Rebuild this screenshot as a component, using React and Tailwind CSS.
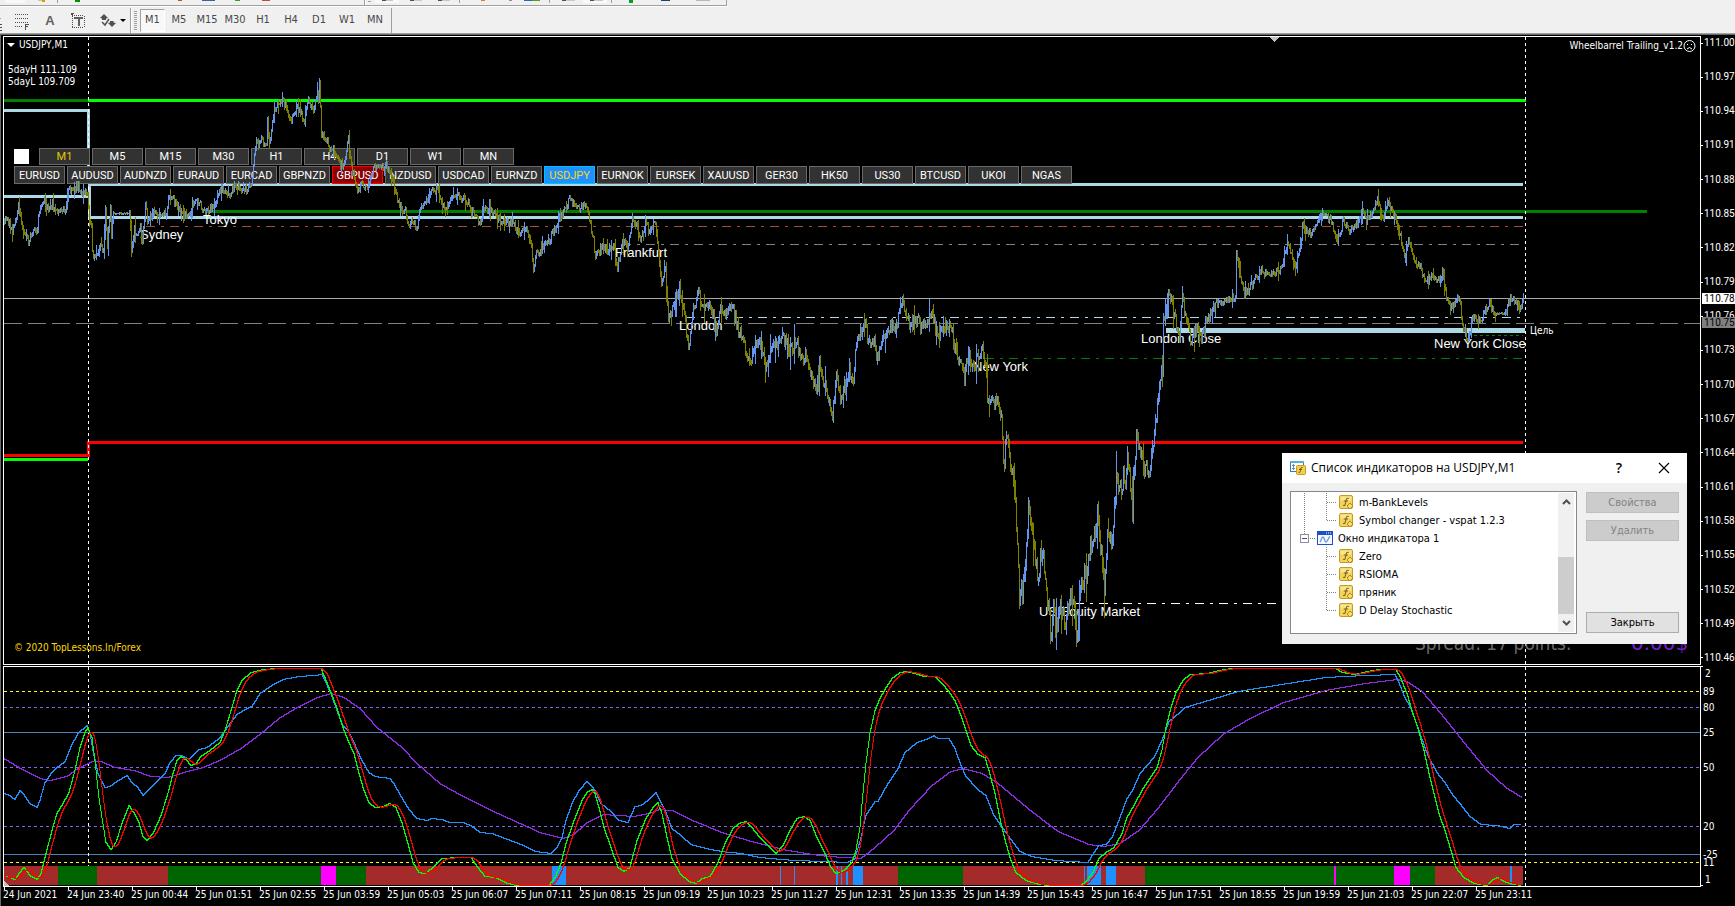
import React from "react";

/* ---------- data ---------- */

const PRICE = [
  [4,220],[8,222],[12,229],[16,217],[18,207],[22,227],[28,243],[31,233],[36,230],[39,213],[44,199],[46,208],[52,204],[55,211],
  [65,209],[67,190],[74,189],[78,184],[81,193],[84,190],[87,197],[89,221],[91,224],[92,253],[97,256],[99,247],[103,247],
  [105,210],[107,245],[110,209],[111,240],[113,213],[129,213],[131,247],[134,230],[137,238],[140,222],[142,240],[145,204],
  [147,220],[152,213],[166,212],[168,198],[176,200],[178,210],[189,218],[192,204],[200,201],[203,212],[214,205],[221,188],
  [229,193],[236,184],[244,190],[251,187],[253,163],[256,142],[261,140],[266,147],[267,122],[269,143],[273,113],[276,107],
  [282,101],[287,110],[291,120],[296,107],[299,110],[304,121],[308,100],[313,110],[317,87],[318,100],[319,80],[321,133],
  [326,140],[329,147],[335,153],[340,167],[344,163],[348,138],[351,167],[357,190],[362,183],[368,190],[372,170],[378,163],
  [385,167],[389,167],[395,190],[400,207],[405,210],[408,227],[412,220],[416,230],[420,208],[425,203],[431,187],[437,190],
  [442,203],[448,205],[454,193],[461,198],[467,200],[472,213],[479,222],[484,210],[490,208],[496,217],[503,222],[512,223],
  [518,233],[527,230],[531,247],[533,270],[536,253],[542,247],[549,240],[555,227],[562,213],[566,207],[569,198],[573,203],
  [579,207],[585,205],[590,223],[593,240],[595,260],[601,245],[607,250],[613,245],[617,267],[622,243],[628,245],[632,217],
  [635,223],[640,237],[645,223],[650,233],[654,218],[658,250],[660,277],[665,272],[668,318],[672,307],[679,288],[684,317],
  [688,345],[692,317],[698,290],[703,313],[706,301],[712,313],[716,330],[719,312],[727,313],[732,305],[738,330],[743,337],
  [748,362],[753,353],[755,343],[760,343],[765,368],[770,347],[775,347],[782,333],[789,353],[795,343],[803,357],[807,357],
  [812,377],[816,387],[819,370],[825,387],[829,405],[832,418],[836,377],[840,400],[844,383],[849,372],[853,377],[856,343],
  [864,323],[869,343],[873,337],[877,357],[882,343],[888,327],[897,323],[902,297],[906,317],[911,327],[917,317],[921,330],
  [927,317],[933,317],[937,337],[941,327],[950,327],[954,343],[958,357],[964,377],[968,353],[974,370],[977,357],[982,350],
  [986,367],[987,407],[990,393],[993,400],[999,407],[1002,433],[1003,467],[1006,440],[1010,460],[1013,480],[1015,500],
  [1017,550],[1019,595],[1022,593],[1025,557],[1028,507],[1032,533],[1035,560],[1038,583],[1040,550],[1043,560],[1047,600],
  [1051,640],[1053,600],[1056,627],[1061,603],[1066,623],[1068,600],[1073,603],[1076,640],[1080,590],[1085,573],[1090,547],
  [1093,543],[1097,513],[1099,533],[1102,567],[1104,587],[1108,527],[1111,543],[1114,510],[1117,470],[1119,493],[1123,477],
  [1125,488],[1127,467],[1132,490],[1135,460],[1136,437],[1139,440],[1143,470],[1146,457],[1149,478],[1152,443],[1155,427],
  [1157,397],[1159,377],[1162,367],[1163,320],[1165,312],[1169,290],[1175,320],[1179,333],[1182,293],[1185,317],[1190,338],
  [1197,327],[1201,341],[1206,320],[1213,307],[1221,300],[1229,297],[1235,297],[1236,250],[1240,277],[1243,290],[1246,293],
  [1252,283],[1261,270],[1269,277],[1276,270],[1281,270],[1287,240],[1294,267],[1298,257],[1302,227],[1310,233],[1315,227],
  [1321,213],[1331,220],[1336,243],[1343,220],[1348,230],[1353,230],[1361,212],[1366,220],[1372,213],[1377,200],[1382,220],
  [1388,200],[1394,213],[1400,237],[1404,257],[1408,240],[1413,260],[1420,267],[1425,283],[1432,273],[1437,283],[1442,273],
  [1446,297],[1452,307],[1459,297],[1463,330],[1468,340],[1472,317],[1479,322],[1489,300],[1494,313],[1505,313],[1510,297],
  [1517,300],[1519,313],[1523,297],
];

const FAST = [
  [4,877],[8,876],[15,879],[19,873],[24,867],[30,875],[37,879],[41,873],[46,853],[52,830],[57,813],[63,803],[69,792],[75,770],
  [80,747],[85,732],[88,727],[92,737],[95,760],[99,797],[103,823],[106,842],[111,849],[116,842],[122,823],[129,805],[134,812],
  [139,822],[143,836],[147,840],[153,833],[161,815],[168,793],[173,773],[177,760],[181,756],[187,760],[191,765],[196,763],
  [201,756],[210,750],[220,742],[226,727],[232,707],[237,690],[242,680],[251,672],[264,669],[276,668],[321,668],[325,677],
  [331,692],[337,708],[343,727],[348,740],[354,753],[359,773],[364,790],[369,802],[375,807],[383,806],[390,803],[396,807],
  [402,822],[408,843],[413,862],[419,872],[425,873],[432,868],[442,858],[459,857],[471,857],[478,867],[485,876],[496,877],
  [505,882],[517,885],[549,885],[555,877],[561,863],[566,843],[574,820],[582,800],[587,792],[592,789],[595,793],[599,807],
  [604,827],[611,847],[618,867],[624,871],[630,867],[637,840],[646,818],[653,807],[658,802],[662,813],[667,837],[672,858],
  [680,873],[689,881],[696,883],[702,878],[710,876],[718,862],[725,843],[733,828],[739,823],[746,821],[752,827],[760,837],
  [768,845],[776,853],[783,845],[790,830],[797,818],[804,816],[810,820],[817,837],[825,853],[831,867],[836,873],[844,870],
  [852,862],[856,850],[860,827],[863,793],[866,763],[870,733],[875,710],[880,698],[886,687],[892,678],[900,672],[907,671],
  [915,673],[924,676],[935,676],[942,683],[949,691],[955,700],[961,715],[967,733],[971,745],[978,754],[985,757],[989,770],
  [995,793],[1001,823],[1006,843],[1011,860],[1016,872],[1026,880],[1039,884],[1051,885],[1081,885],[1087,880],[1093,872],
  [1099,858],[1106,852],[1114,847],[1122,833],[1127,817],[1135,803],[1143,788],[1150,778],[1157,767],[1162,750],[1166,727],
  [1171,707],[1176,692],[1183,680],[1190,674],[1208,673],[1219,670],[1231,668],[1336,668],[1342,672],[1355,674],[1367,671],
  [1380,669],[1396,669],[1401,678],[1407,693],[1412,710],[1418,728],[1424,750],[1429,773],[1434,793],[1439,813],[1445,830],
  [1451,850],[1456,867],[1464,877],[1474,883],[1487,885],[1493,879],[1498,877],[1504,881],[1510,883],[1521,885],
];

const RSI = [
  [4,793],[8,794],[15,799],[20,790],[24,794],[30,803],[37,807],[40,800],[45,782],[51,773],[57,767],[65,761],[71,746],[78,733],
  [87,725],[90,732],[93,750],[98,773],[105,787],[110,786],[117,781],[127,775],[132,782],[138,787],[143,795],[151,787],[165,773],
  [170,762],[176,755],[182,755],[189,759],[199,749],[207,747],[214,742],[220,737],[228,726],[237,714],[245,709],[252,706],
  [260,693],[272,685],[283,679],[299,676],[314,675],[322,674],[325,680],[331,693],[337,710],[343,725],[348,730],[354,742],
  [362,760],[369,772],[375,776],[390,778],[394,783],[400,794],[409,809],[417,818],[427,820],[432,818],[442,819],[450,822],
  [463,822],[471,825],[480,832],[492,833],[505,838],[524,845],[536,851],[551,853],[557,847],[562,837],[566,820],[572,803],
  [579,790],[587,781],[592,786],[595,790],[601,803],[611,811],[619,820],[628,822],[635,806],[641,805],[649,799],[656,792],
  [660,800],[666,812],[672,828],[681,835],[691,844],[706,848],[722,851],[741,853],[760,857],[794,860],[825,861],[848,862],
  [855,858],[861,837],[866,815],[875,801],[878,801],[888,783],[898,768],[905,752],[917,742],[926,739],[934,735],[938,738],
  [949,738],[955,748],[961,765],[966,776],[978,789],[986,795],[993,813],[1001,825],[1011,839],[1020,851],[1032,856],[1055,860],
  [1088,862],[1094,852],[1099,845],[1106,844],[1112,837],[1117,825],[1127,798],[1133,789],[1140,773],[1146,766],[1154,757],
  [1162,740],[1169,721],[1180,712],[1185,707],[1212,699],[1238,691],[1288,683],[1326,677],[1365,675],[1395,674],[1399,682],
  [1404,695],[1411,708],[1420,733],[1428,755],[1437,772],[1445,782],[1453,795],[1460,803],[1470,816],[1481,824],[1497,825],
  [1510,828],[1514,824],[1521,824],
];

const MA = [
  [4,758],[19,767],[40,778],[50,780],[67,776],[78,768],[92,761],[101,761],[115,767],[134,770],[151,776],[168,777],[184,772],
  [203,767],[220,760],[241,748],[260,734],[279,718],[299,706],[318,697],[331,693],[344,697],[360,708],[377,727],[402,747],
  [417,763],[440,783],[463,796],[498,813],[540,832],[563,838],[574,834],[586,823],[597,817],[603,814],[634,816],[649,813],
  [660,809],[672,810],[695,821],[722,832],[748,840],[783,849],[813,854],[829,856],[861,858],[875,847],[894,830],[909,810],
  [932,785],[951,771],[963,768],[982,773],[997,782],[1028,808],[1058,831],[1089,844],[1104,846],[1120,843],[1139,830],
  [1158,808],[1180,779],[1198,757],[1223,734],[1250,718],[1284,702],[1326,690],[1365,683],[1397,679],[1407,681],[1422,691],
  [1441,713],[1460,737],[1487,770],[1506,787],[1522,797],
];

const TREND = [
  [4,58,"#a52a2a"],[58,97,"#006400"],[97,168,"#a52a2a"],[168,321,"#006400"],[321,336,"#ff00ff"],[336,366,"#006400"],
  [366,552,"#a52a2a"],[552,566,"#1e90ff"],[566,898,"#a52a2a"],[780,781,"#1e90ff"],[794,795,"#1e90ff"],[836,838,"#1e90ff"],
  [841,842,"#1e90ff"],[846,848,"#1e90ff"],[853,863,"#1e90ff"],[898,963,"#006400"],[963,1145,"#a52a2a"],[1084,1085,"#1e90ff"],
  [1087,1101,"#1e90ff"],[1106,1116,"#1e90ff"],[1145,1435,"#006400"],[1334,1336,"#ff00ff"],[1394,1410,"#ff00ff"],
  [1435,1523,"#a52a2a"],[1510,1512,"#1e90ff"],
];

const SESSIONS = [
  ["Tokyo", 203, 224], ["Sydney", 140, 239], ["Frankfurt", 615, 257], ["London", 679, 330], ["New York", 973, 371],
  ["London Close", 1141, 343], ["New York Close", 1434, 348], ["US Equity Market", 1039, 616],
];

const PRICES = ["111.00","110.97","110.94","110.91","110.88","110.85","110.82","110.79","110.76","110.73","110.70",
  "110.67","110.64","110.61","110.58","110.55","110.52","110.49","110.46"];

const TIMES = ["24 Jun 2021","24 Jun 23:40","25 Jun 00:44","25 Jun 01:51","25 Jun 02:55","25 Jun 03:59","25 Jun 05:03",
  "25 Jun 06:07","25 Jun 07:11","25 Jun 08:15","25 Jun 09:19","25 Jun 10:23","25 Jun 11:27","25 Jun 12:31","25 Jun 13:35",
  "25 Jun 14:39","25 Jun 15:43","25 Jun 16:47","25 Jun 17:51","25 Jun 18:55","25 Jun 19:59","25 Jun 21:03","25 Jun 22:07",
  "25 Jun 23:11"];

const LEVELS = [
  ["89", 24, "#ffff00", "3 3"], ["80", 40, "#7b68ee", "3 3"], ["25", 65, "#4682b4", ""], ["50", 100, "#7b68ee", "3 3"],
  ["20", 159, "#7b68ee", "3 3"], ["-25", 187, "#4682b4", ""], ["11", 195, "#ffff00", "3 3"],
];

const SYMBOLS = ["EURUSD","AUDUSD","AUDNZD","EURAUD","EURCAD","GBPNZD","GBPUSD","NZDUSD","USDCAD","EURNZD","USDJPY","EURNOK",
  "EURSEK","XAUUSD","GER30","HK50","US30","BTCUSD","UKOI","NGAS"];

/* ---------- geometry ---------- */

function sample(points) {
  const out = [];
  let k = 0;
  const last = points[points.length - 1][0];
  for (let x = points[0][0]; x <= last; x++) {
    while (k < points.length - 2 && points[k + 1][0] < x) k++;
    const [x0, y0] = points[k];
    const [x1, y1] = points[k + 1];
    out.push([x, y0 + ((y1 - y0) * (x - x0)) / (x1 - x0)]);
  }
  return out;
}

function linePath(pts) {
  return pts.map(([x, y], i) => `${i ? "L" : "M"}${x} ${Math.round(y) + 0.5}`).join("");
}

function signalOf(pts, n) {
  return pts.map(([x], i) => {
    const win = pts.slice(Math.max(0, i - n + 1), i + 1);
    return [x, win.reduce((s, p) => s + p[1], 0) / win.length];
  });
}

function candlePaths() {
  let seed = 4711;
  const rnd = () => {
    seed = (seed * 1103515245 + 12345) % 2147483648;
    return seed / 2147483648;
  };
  let up = "";
  let down = "";
  let prev = PRICE[0][1];
  for (const [x, base] of sample(PRICE)) {
    const calm = (x > 113 && x < 129) || (x > 1495 && x < 1505);
    const amp = calm ? 1 : x > 1000 && x < 1160 ? 20 : x > 660 && x < 1210 ? 13 : 8;
    const close = base + (rnd() - 0.5) * amp;
    const wick = calm ? 1 : rnd() > 0.8 ? amp * 1.2 : amp * 0.3;
    const top = Math.round(Math.min(prev, close) - rnd() * wick);
    const bottom = Math.round(Math.max(prev, close) + rnd() * wick) + 1;
    const seg = `M${x}.5 ${top}V${bottom}`;
    if (close < prev) up += seg;
    else down += seg;
    prev = close;
  }
  return { up, down };
}

const CANDLES = candlePaths();
const FAST_PTS = sample(FAST);
const FAST_PATH = linePath(FAST_PTS);
const SIGNAL_PATH = linePath(signalOf(FAST_PTS, 9));
const RSI_PATH = linePath(sample(RSI));
const MA_PATH = linePath(sample(MA));

/* ---------- toolbar ---------- */

function UpperToolbarStrip() {
  const sep = [57, 459, 549, 611];
  return (
    <svg className="block h-[7px] w-full" aria-hidden="true" shapeRendering="crispEdges">
      <rect width="100%" height="7" fill="#f0f0f0" />
      <rect x="5" y="0" width="20" height="3" fill="#f8f8f8" />
      <rect x="375" y="0" width="24" height="3" fill="#fafafa" />
      <rect x="583" y="0" width="24" height="3" fill="#fafafa" />
      {sep.map((x) => <rect key={x} x={x} y="0" width="1" height="3" fill="#a0a0a0" />)}
      <path d="M38 0h6v1h-6z" fill="#cfc7a0" />
      <path d="M42 0h3v2h-3z" fill="#d8a010" />
      <path d="M75 0h5v2h-5z" fill="#009000" />
      <path d="M178 0h4v1h-4z" fill="#a86020" />
      <path d="M202 0h13v1h-13z" fill="#4060a0" />
      <path d="M235 0h5v1h-5z" fill="#30a030" />
      <path d="M262 0h8v1h-8z" fill="#c05030" />
      <path d="M382 0h4v1h-4zM410 0h4v1h-4zM438 0h4v1h-4zM562 0h4v1h-4zM590 0h4v1h-4z" fill="#505050" />
      <path d="M386 0h7v1h-7zM414 0h8v1h-8zM442 0h8v1h-8zM566 0h9v1h-9zM594 0h9v1h-9z" fill="#c8c8c8" />
      <path d="M481 0h4v1h-4z" fill="#c88820" />
      <path d="M509 0h3v1h-3z" fill="#909090" />
      <path d="M524 0h8v1h-8z" fill="#3060d0" />
      <path d="M532 0h8v1h-8z" fill="#50a020" />
      <path d="M629 0h4v3h-4z" fill="#00a020" />
      <path d="M661 0h9v1h-9z" fill="#104878" />
      <path d="M696 0h14v1h-14z" fill="#b8b8b8" />
      <path d="M0 5h727v1H0z" fill="#a0a0a0" />
      <path d="M0 6h728v1H0z" fill="#ffffff" />
      <path d="M364 0h1v5h-1zM726 0h1v6h-1z" fill="#a0a0a0" />
      <path d="M365 0h1v5h-1z" fill="#ffffff" />
      <path d="M368 1h3v1h-3z" fill="#a0a0a0" />
    </svg>
  );
}

const toolButton = "flex h-6 w-7 items-center justify-center";

function ToolBar() {
  const frames = ["M5", "M15", "M30", "H1", "H4", "D1", "W1", "MN"];
  return (
    <header className="shrink-0 border-b border-[#696969] bg-[#f0f0f0]">
      <UpperToolbarStrip />
      <div className="flex h-[27px] items-center border-b border-[#a0a0a0] pt-px text-[11px] text-[#484848]">
        <div className="flex h-full w-[131px] items-center border-r border-[#a0a0a0]">
          <svg className="h-6 w-[8px]" aria-hidden="true" shapeRendering="crispEdges">
            <path d="M0 15h2M0 18h2M0 21h2" stroke="#505050" />
            <path d="M0 9h1" stroke="#a0a0a0" />
          </svg>
          <button className={toolButton} aria-label="Fibonacci retracement">
            <svg width="16" height="18" viewBox="0 0 16 18" fill="none" stroke="#505050" shapeRendering="crispEdges">
              <path d="M1 2.5h14M1 6.5h14M1 10.5h14M1 14.5h8" strokeDasharray="1 1" />
              <path d="M11.5 12v6M12 12.5h3M12 14.5h2" />
            </svg>
          </button>
          <button className={`${toolButton} font-['Liberation_Sans',sans-serif] text-[13px] font-bold text-[#606060]`}>A</button>
          <button className={toolButton} aria-label="Text label">
            <svg width="16" height="16" viewBox="0 0 16 16" fill="none" shapeRendering="crispEdges">
              <path d="M2 2.5h12M2 14.5h12M2.5 3v12M14.5 3v12" stroke="#505050" strokeDasharray="1 1" />
              <path d="M1 0.5h3M1 1.5h2" stroke="#505050" />
              <path d="M4 5h9M8.5 5v8" stroke="#606060" strokeWidth="2" />
            </svg>
          </button>
          <button className="flex h-6 flex-1 items-center justify-center gap-1 pl-1" aria-label="Arrows">
            <svg width="16" height="14" viewBox="0 0 16 14" fill="#505050">
              <path d="M4 0l4 4-2 .5V6H2V4.500L0 4zM12 13l-4-4 2-.5V7h3.500v1.500L16 9z" />
              <path d="M2 8l3 3 4-6" fill="none" stroke="#505050" strokeWidth="1.500" />
            </svg>
            <svg width="6" height="3" viewBox="0 0 6 3"><path d="M0 0h6L3 3z" fill="#000" /></svg>
          </button>
        </div>
        <div className="flex h-full w-[261px] items-center border-r border-l border-r-[#a0a0a0] border-l-white">
          <svg className="mr-[3px] ml-[2px] h-5 w-[3px]" aria-hidden="true" shapeRendering="crispEdges">
            <path d="M1.5 0v20" stroke="#a0a0a0" strokeWidth="3" strokeDasharray="1 1" />
          </svg>
          <button aria-pressed="true" className="flex h-[23px] w-[25px] items-center justify-center border border-t-[#a0a0a0] border-r-white border-b-white border-l-[#a0a0a0] bg-[#f8f8f8]">
            M1
          </button>
          {frames.map((f) => <button key={f} className={toolButton}>{f}</button>)}
        </div>
      </div>
    </header>
  );
}

/* ---------- price pane ---------- */

const keyBase = "h-full w-[51px] border font-['Roboto','Liberation_Sans',sans-serif] text-[11px] leading-none";
const keyPlain = "border-[#696969] bg-[#323232] text-white";

function KeyRows() {
  return (
    <div className="relative flex flex-col items-start gap-px pt-[111px] pl-[10px]">
      <div className="flex h-[17px] items-center gap-[2px]">
        <input type="checkbox" aria-label="Show panel" className="mr-[8px] h-[15px] w-[15px] appearance-none bg-white" />
        {["M1","M5","M15","M30","H1","H4","D1","W1","MN"].map((f) => (
          <button key={f} className={`${keyBase} border-[#696969] bg-[#323232] ${f === "M1" ? "text-[#e6c800]" : "text-white"}`}>{f}</button>
        ))}
      </div>
      <div className="flex h-[18px] gap-[2px]">
        {SYMBOLS.map((s) => (
          <button
            key={s}
            className={`${keyBase} ${s === "GBPUSD" ? "border-[#ff0000] bg-[#8b0000] text-white" : s === "USDJPY" ? "border-[#00bfff] bg-[#1e90ff] text-[#ffd700]" : keyPlain}`}
          >
            {s}
          </button>
        ))}
      </div>
    </div>
  );
}

function PriceLines() {
  const dd = "9 6 3 6";
  return (
    <svg className="absolute inset-0 h-full w-full" aria-hidden="true" shapeRendering="crispEdges">
      <g fill="none" transform="translate(-4 -37)">
        <path d="M4 100.500H88" stroke="#008000" strokeWidth="3" />
        <path d="M88 100.500H1526" stroke="#00ff00" strokeWidth="3" />
        <path d="M4 110.500H88.500V184M4 196.500H88" stroke="#add8e6" strokeWidth="3" />
        <path d="M205 211.500H1647" stroke="#008000" strokeWidth="3" />
        <path d="M1523 184.500H89.500V217.500H1523" stroke="#add8e6" strokeWidth="3" />
        <path d="M146 226.500H1523" stroke="#a0522d" strokeDasharray={dd} />
        <path d="M622 244.500H1523" stroke="#808080" strokeDasharray={dd} />
        <path d="M686 317.500H1523" stroke="#add8e6" strokeDasharray={dd} />
        <path d="M1166 330.500H1525" stroke="#add8e6" strokeWidth="5" />
        <path d="M1468 335.500H1523" stroke="#008000" strokeDasharray="3 3" />
        <path d="M985 358.500H1523" stroke="#008000" strokeDasharray={dd} />
        <path d="M4 459.500H88" stroke="#00ff00" strokeWidth="3" />
        <path d="M4 455.500H88.500V442.500H1523" stroke="#ff0000" strokeWidth="3" />
        <path d="M1075 603.500H1290" stroke="#ffffff" strokeDasharray={dd} />
      </g>
      <path d="M1266 0h9l-4.500 5z" fill="#c0c0c0" />
      <line x1="0" x2="100%" y1="261.500" y2="261.500" stroke="#a9a9a9" />
      <line x1="0" x2="100%" y1="286.500" y2="286.500" stroke="#808080" strokeDasharray="18 6" />
      <line x1="84.500" x2="84.500" y1="0" y2="100%" stroke="#ffffff" strokeDasharray="3 3" />
      <line x1="1521.500" x2="1521.500" y1="0" y2="100%" stroke="#ffffff" strokeDasharray="3 3" />
    </svg>
  );
}

function ChartNotes() {
  return (
    <svg className="pointer-events-none absolute inset-0 h-full w-full">
      <g transform="translate(-4 -37)" fill="#ffffff" fontSize="10">
        <path d="M7 43h8l-4 4z" />
        <text x="19" y="48">USDJPY,M1</text>
        <text x="8" y="73">5dayH 111.109</text>
        <text x="8" y="85">5dayL 109.709</text>
        <text x="14" y="651" fill="#ffd700">© 2020 TopLessons.In/Forex</text>
        <text x="1530" y="334">Цель</text>
        <text x="1415" y="650" fontSize="19" fill="#696969">Spread: 17 points.</text>
        <text x="1631" y="650" fontSize="20" fill="#7020c0" className="font-['DejaVu_Sans',sans-serif]">0.00$</text>
        <text x="1683" y="49" textAnchor="end">Wheelbarrel Trailing_v1.2</text>
        <g fill="none" stroke="#ffffff">
          <circle cx="1689.500" cy="46" r="5.500" />
          <path d="M1687 44.500h1M1691 44.500h1M1687 49q2.500-3 5 0" />
        </g>
        <g className="font-['Liberation_Sans',sans-serif]" fontSize="13">
          {SESSIONS.map(([name, x, y]) => <text key={name} x={x} y={y}>{name}</text>)}
        </g>
      </g>
    </svg>
  );
}

function Candles() {
  return (
    <svg className="pointer-events-none absolute inset-0 h-full w-full" aria-hidden="true" shapeRendering="crispEdges">
      <g fill="none" transform="translate(-4 -37)">
        <path d={CANDLES.down} stroke="#808000" />
        <path d={CANDLES.up} stroke="#6495ed" />
      </g>
    </svg>
  );
}

function PricePane() {
  return (
    <section className="mb-px flex min-h-0 flex-1" aria-label="Price chart">
      <div className="relative min-w-0 flex-1 overflow-hidden border border-white">
        <PriceLines />
        <ChartNotes />
        <KeyRows />
        <Candles />
      </div>
      <div className="relative w-[34px] shrink-0 overflow-hidden font-['Roboto','Liberation_Sans',sans-serif] text-[10px] leading-none text-white">
        <div className="flex h-full flex-col justify-between">
          {PRICES.map((p) => (
            <div key={p} className="flex h-[14px] items-center gap-px">
              <span className="h-px w-[2px] shrink-0 bg-white" />
              <span>{p}</span>
            </div>
          ))}
        </div>
        <span className="absolute top-[281px] left-px h-[11px] w-full bg-[#808080] pl-[2px] leading-[11px] text-black">110.75</span>
        <span className="absolute top-[257px] left-px h-[11px] w-full bg-white pl-[2px] leading-[11px] text-black">110.78</span>
      </div>
    </section>
  );
}

/* ---------- oscillator pane ---------- */

function OscillatorPane() {
  return (
    <section className="flex h-[221px] shrink-0" aria-label="Indicator window">
      <div className="relative min-w-0 flex-1 overflow-hidden border border-white">
        <svg className="absolute inset-0 h-full w-full" aria-hidden="true" shapeRendering="crispEdges">
          {LEVELS.map(([name, y, color, dash]) => (
            <line key={name} x1="0" x2="100%" y1={y + 0.5} y2={y + 0.5} stroke={color} strokeDasharray={dash || undefined} />
          ))}
          {TREND.map(([a, b, color]) => <rect key={a} x={a - 4} y="199" width={b - a} height="19" fill={color} />)}
          <line x1="84.500" x2="84.500" y1="0" y2="199" stroke="#ffffff" strokeDasharray="3 3" />
          <line x1="1521.500" x2="1521.500" y1="0" y2="100%" stroke="#ffffff" strokeDasharray="3 3" />
          <g fill="none" transform="translate(-4 -667)">
            <path d={MA_PATH} stroke="#8a2be2" />
            <path d={RSI_PATH} stroke="#1e90ff" />
            <path d={FAST_PATH} stroke="#00ff00" />
            <path d={SIGNAL_PATH} stroke="#ff0000" />
          </g>
          <path d="M0 214v5h5z" fill="#c0c0c0" />
        </svg>
      </div>
      <svg className="w-[34px] shrink-0" fill="#ffffff" fontSize="10">
        <path d="M0 .5h2M0 219.500h2" stroke="#ffffff" />
        <text x="4" y="11">2</text>
        {LEVELS.map(([name, y]) => <text key={name} x="2" y={y + 5}>{name}</text>)}
        <text x="4" y="217">1</text>
      </svg>
    </section>
  );
}

function TimeAxis() {
  return (
    <div className="flex h-[19px] shrink-0 overflow-hidden pl-px text-[10px] leading-none text-white">
      {TIMES.map((t) => (
        <div key={t} className="w-16 shrink-0 whitespace-nowrap">
          <div className="h-[3px] w-px bg-white" />
          <div className="-ml-px">{t}</div>
        </div>
      ))}
    </div>
  );
}

/* ---------- dialog ---------- */

function FxIcon() {
  return (
    <svg width="15" height="15" viewBox="0 0 15 15" className="shrink-0" aria-hidden="true">
      <rect x=".5" y=".5" width="13" height="13" rx="1.500" fill="#f2d35c" stroke="#c89b1e" />
      <rect x="1.500" y="1.500" width="11" height="4" fill="#f8e48e" />
      <path d="M9.800 3.500c-1.500-.8-2.300 0-2.600 1.500L6.300 9c-.3 1.500-1 1.800-2.200 1.200M4.800 6h4.200" fill="none" stroke="#7a6118" strokeWidth="1.100" />
      <path d="M11 8l3 3-3 3-3-3z" fill="#f7dc6a" stroke="#b08a1c" />
    </svg>
  );
}

function WindowIcon() {
  return (
    <svg width="16" height="14" viewBox="0 0 16 14" className="shrink-0" aria-hidden="true">
      <rect x=".5" y=".5" width="15" height="13" fill="#f4f8ff" stroke="#1c50c8" />
      <rect width="16" height="4" fill="#1c50c8" />
      <path d="M9 2h1M11 2h1M13 2h1" stroke="#ffffff" />
      <path d="M3 11c1-1 1.500-5 3-5s1.500 5 3 5 2-4 4-5.500" fill="none" stroke="#7090e0" strokeWidth="1.300" />
    </svg>
  );
}

function DialogIcon() {
  return (
    <svg width="16" height="15" viewBox="0 0 16 15" aria-hidden="true">
      <rect x=".5" y=".5" width="13" height="10" fill="#ffffff" stroke="#2a80b8" />
      <rect width="14" height="2" fill="#5ab0dc" />
      <path d="M3.500 3v6M2 4.500h3M2 7.500h3" stroke="#6090a8" />
      <rect x="6.500" y="4.500" width="9" height="9" rx="1" fill="#f2cf4c" stroke="#c89b1e" />
      <path d="M12.500 6.500c-2-.5-1.600 1-2 3s-.8 2.200-2 1.800M9 8.500h3" fill="none" stroke="#6b5310" />
    </svg>
  );
}

function Leaf({ name, last }) {
  return (
    <li className="flex h-[18px] items-center">
      <svg width="11" height="18" className="mr-[2px] ml-[34px] shrink-0" aria-hidden="true" shapeRendering="crispEdges">
        <path d={last ? "M.5 0V10M1 9.500H11" : "M.5 0V18M1 9.500H11"} stroke="#808080" strokeDasharray="1 1" fill="none" />
      </svg>
      <FxIcon />
      <span className="ml-[5px] whitespace-nowrap">{name}</span>
    </li>
  );
}

const dialogButton = "h-[21px] w-full border text-[11px] leading-none";

function IndicatorDialog() {
  return (
    <div role="dialog" aria-labelledby="dlg-title" className="absolute top-[453px] right-12 w-[405px] bg-[#f0f0f0] text-[11px] leading-none text-black">
      <div className="flex h-[30px] items-center bg-white pr-[17px] pl-2">
        <DialogIcon />
        <h2 id="dlg-title" className="ml-[5px] flex-1 font-['Open_Sans','Noto_Sans',sans-serif] text-[12px]">Список индикаторов на USDJPY,M1</h2>
        <button className="mr-[31px] w-4 font-['Open_Sans',sans-serif] text-[14px] font-semibold" aria-label="Help">?</button>
        <button aria-label="Close">
          <svg width="12" height="12" viewBox="0 0 12 12" stroke="#000" strokeWidth="1.100"><path d="M1 1l10 10M11 1L1 11" /></svg>
        </button>
      </div>
      <div className="flex gap-[9px] pt-2 pr-2 pb-[10px] pl-2">
        <div className="flex h-[143px] flex-1 border border-[#828790] bg-white py-px pr-[2px] pl-px">
          <ul className="relative min-w-0 flex-1">
            <svg width="3" height="42" className="absolute top-0 left-[12px]" aria-hidden="true" shapeRendering="crispEdges">
              <path d="M.5 0V42" stroke="#808080" strokeDasharray="1 1" />
            </svg>
            <Leaf name="m-BankLevels" />
            <Leaf name="Symbol changer - vspat 1.2.3" last />
            <li>
              <div className="flex h-[18px] items-center pl-2">
                <svg width="17" height="9" className="shrink-0" aria-hidden="true" shapeRendering="crispEdges">
                  <rect x=".5" y=".5" width="8" height="8" fill="#fff" stroke="#919191" />
                  <path d="M2 4.500h5" stroke="#3050b0" />
                  <path d="M10 4.500h6" stroke="#808080" strokeDasharray="1 1" />
                </svg>
                <WindowIcon />
                <span className="ml-[5px]">Окно индикатора 1</span>
              </div>
              <ul>
                <Leaf name="Zero" />
                <Leaf name="RSIOMA" />
                <Leaf name="пряник" />
                <Leaf name="D Delay Stochastic" last />
              </ul>
            </li>
          </ul>
          <div className="flex w-[16px] flex-col bg-[#f0f0f0]">
            <button className="flex h-[18px] items-center justify-center" aria-label="Scroll up">
              <svg width="9" height="6" viewBox="0 0 9 6" fill="none" stroke="#505050" strokeWidth="2"><path d="M1 5l3.500-3.500L8 5" /></svg>
            </button>
            <div className="flex flex-1 flex-col justify-end"><div className="h-[57px] bg-[#cdcdcd]" /></div>
            <button className="flex h-[18px] items-center justify-center" aria-label="Scroll down">
              <svg width="9" height="6" viewBox="0 0 9 6" fill="none" stroke="#505050" strokeWidth="2"><path d="M1 1l3.500 3.500L8 1" /></svg>
            </button>
          </div>
        </div>
        <div className="flex w-[93px] flex-col gap-[7px] pt-px pb-px">
          <button disabled className={`${dialogButton} border-[#bfbfbf] bg-[#cccccc] text-[#838383]`}>Свойства</button>
          <button disabled className={`${dialogButton} border-[#bfbfbf] bg-[#cccccc] text-[#838383]`}>Удалить</button>
          <button className={`${dialogButton} mt-auto border-[#adadad] bg-[#e1e1e1]`}>Закрыть</button>
        </div>
      </div>
    </div>
  );
}

export default function App() {
  return (
    <div className="relative flex h-screen flex-col overflow-hidden bg-black font-['DejaVu_Sans_Condensed','Noto_Sans',sans-serif]">
      <ToolBar />
      <main className="flex min-h-0 flex-1 flex-col border-l border-[#696969] pt-px pl-[2px]">
        <PricePane />
        <OscillatorPane />
        <TimeAxis />
      </main>
      <IndicatorDialog />
    </div>
  );
}
